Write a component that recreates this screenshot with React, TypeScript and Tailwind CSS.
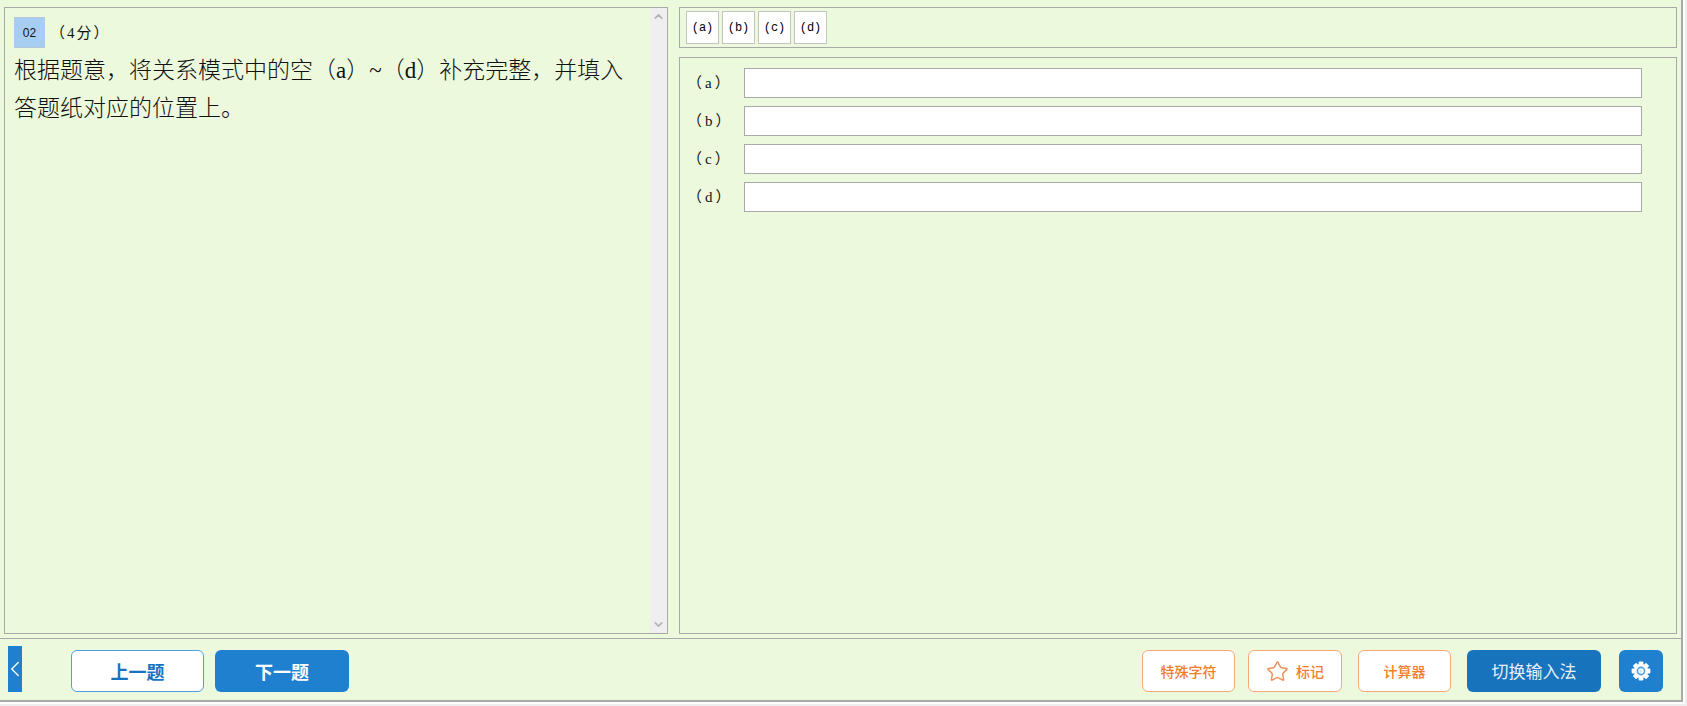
import { Star, ChevronLeft, ChevronUp, ChevronDown } from 'lucide-react'

const serif = '[font-family:"Liberation_Serif","Noto_Sans_CJK_SC",serif]'

const tabs = ['(a)', '(b)', '(c)', '(d)']
const blanks = ['（a）', '（b）', '（c）', '（d）']

function ToolButton({ label, widthClass }: { label: string; widthClass: string }) {
  return (
    <button className={`flex h-[42px] items-center justify-center rounded-md border border-[#f6a878] bg-white text-[14px] font-medium text-[#f47c2c] ${widthClass}`}>
      {label}
    </button>
  )
}

function GearIcon() {
  return (
    <svg viewBox="0 0 20 20" className="size-[20px]">
      {[0, 45, 90, 135].map((a) => (
        <rect key={a} x="7.6" y="0.6" width="4.8" height="18.8" rx="0.8" fill="#fff" transform={`rotate(${a} 10 10)`} />
      ))}
      <circle cx="10" cy="10" r="7" fill="#fff" />
      <circle cx="10" cy="10" r="3.6" fill="none" stroke="#4f9fe0" strokeWidth="1.6" />
      <circle cx="10" cy="10" r="1.6" fill="#dbeafa" />
    </svg>
  )
}

export default function App() {
  return (
    <div className='h-[706px] w-[1687px] overflow-hidden bg-[#eeeeee] font-["Noto_Sans_CJK_SC",sans-serif]'>
      <div className="h-[704px] w-[1685px] bg-white">
        <div className="flex h-[702px] w-[1683px] flex-col border-r-2 border-b-2 border-[#a9a9a9] bg-[#ecf9dd]">
          <div className="flex h-[638px] gap-[11px] pt-[7px] pr-[4px] pb-[4px] pl-[4px]">
            <section className="flex w-[664px] border border-[#a9a9a9]">
              <div className="flex-1 pt-[9px] pl-[9px]">
                <div className="flex h-[31px] items-center">
                  <span className="flex h-[31px] w-[31px] items-center justify-center border-y border-[#b4c6d8] bg-[#a8cdf3] font-['Liberation_Sans',sans-serif] text-[12px] text-[#111]">
                    02
                  </span>
                  <span className={`mt-[2px] ml-[5px] text-[15px] tracking-[2px] text-[#111] ${serif}`}>（4分）</span>
                </div>
                <p className={`mt-[4px] w-[622px] text-[23px] leading-[38px] font-light text-[#111] ${serif}`}>
                  根据题意，将关系模式中的空（a）~（d）补充完整，并填入答题纸对应的位置上。
                </p>
              </div>
              <div className="flex w-[17px] flex-col items-center justify-between bg-[#efefef] py-[2px] text-[#b4b4b4]">
                <ChevronUp size={13} strokeWidth={3} />
                <ChevronDown size={13} strokeWidth={3} />
              </div>
            </section>

            <div className="flex flex-1 flex-col gap-[9px]">
              <div className="flex h-[41px] gap-[3px] border border-[#a9a9a9] pt-[3px] pl-[6px]">
                {tabs.map((t) => (
                  <button
                    key={t}
                    className="h-[33px] w-[33px] border border-[#c4c4c4] bg-white font-['Liberation_Mono',monospace] text-[12px] text-black"
                  >
                    {t}
                  </button>
                ))}
              </div>
              <div className="flex flex-1 flex-col gap-[8px] border border-[#a9a9a9] pt-[10px] pl-[7px]">
                {blanks.map((b) => (
                  <div key={b} className="flex h-[30px] items-center">
                    <span className={`w-[57px] text-[15px] tracking-[3px] text-[#111] ${serif}`}>{b}</span>
                    <input className="h-[30px] w-[898px] border border-[#a9a9a9] bg-white" />
                  </div>
                ))}
              </div>
            </div>
          </div>

          <div className="flex flex-1 items-start border-t border-[#a9a9a9] pt-[7px] pr-[18px] pl-[8px]">
            <button className="flex h-[46px] w-[14px] items-center justify-center bg-[#2080d0] text-white">
              <ChevronLeft size={26} strokeWidth={1.2} className="shrink-0" />
            </button>
            <div className="mt-[4px] ml-[49px] flex gap-[11px]">
              <button className="h-[42px] w-[133px] rounded-md border border-[#4f9fe0] bg-white text-[18px] font-bold text-[#1872bd]">
                上一题
              </button>
              <button className="h-[42px] w-[134px] rounded-md bg-[#2080d0] text-[18px] font-bold text-white">
                下一题
              </button>
            </div>
            <div className="mt-[4px] ml-auto flex items-center">
              <ToolButton label="特殊字符" widthClass="w-[93px]" />
              <button className="ml-[13px] flex h-[42px] w-[94px] items-center justify-center gap-[7px] rounded-md border border-[#f6a878] bg-white text-[14px] font-medium text-[#f47c2c]">
                <Star size={23} strokeWidth={1.5} className="text-[#f0905a]" />
                标记
              </button>
              <ToolButton label="计算器" widthClass="ml-[16px] w-[93px]" />
              <button className="ml-[16px] h-[42px] w-[134px] rounded-md bg-[#1873bd] text-[17px] text-[#e4effa]">
                切换输入法
              </button>
              <button className="ml-[18px] flex h-[42px] w-[44px] items-center justify-center rounded-md bg-[#2080d0]">
                <GearIcon />
              </button>
            </div>
          </div>
        </div>
      </div>
    </div>
  )
}
